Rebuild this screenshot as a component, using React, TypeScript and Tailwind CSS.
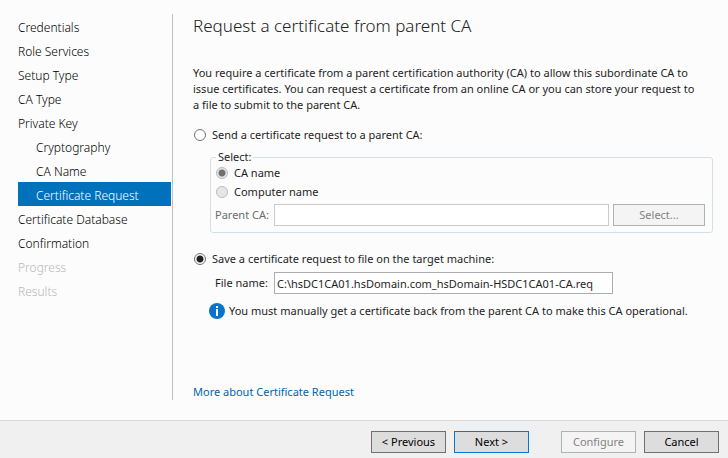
import React from 'react';
import {useState} from 'react';
import clsx from 'clsx';

type Step = {
  name: string;
  nested?: boolean;
  disabled?: boolean;
};

const steps: Step[] = [
  {name: 'Credentials'},
  {name: 'Role Services'},
  {name: 'Setup Type'},
  {name: 'CA Type'},
  {name: 'Private Key'},
  {name: 'Cryptography', nested: true},
  {name: 'CA Name', nested: true},
  {name: 'Certificate Request', nested: true},
  {name: 'Certificate Database'},
  {name: 'Confirmation'},
  {name: 'Progress', disabled: true},
  {name: 'Results', disabled: true},
];

const radioClass =
  'size-3 shrink-0 appearance-none rounded-full border border-[#707070] bg-white checked:bg-[radial-gradient(circle,#212121_3px,#ffffff_4px)] disabled:border-[#bcbcbc] disabled:bg-[#e6e6e6] disabled:checked:bg-[radial-gradient(circle,#707070_3px,#e6e6e6_4px)]';

const buttonClass =
  'h-[22px] border border-[#707070] bg-[#dddddd] text-center text-black disabled:border-[#adb2b5] disabled:bg-[#f4f4f4] disabled:text-[#838383]';

function InfoIcon() {
  return (
    <svg viewBox="0 0 16 16" className="size-4 shrink-0" aria-hidden="true">
      <circle cx="8" cy="8" r="8" fill="#0a74cb" />
      <rect x="7" y="3" width="2" height="2" fill="#fff" />
      <rect x="7" y="6" width="2" height="7" fill="#fff" />
    </svg>
  );
}

function StepList() {
  const [current, setCurrent] = useState('Certificate Request');

  return (
    <nav className="w-[153px] shrink-0 text-[12px] font-light">
      {steps.map((step) => (
        <button
          key={step.name}
          type="button"
          disabled={step.disabled}
          onClick={() => setCurrent(step.name)}
          className={clsx(
            'block h-6 w-full pt-1 text-left leading-5 whitespace-nowrap',
            step.nested && 'pl-[18px]',
            step.disabled && 'text-[#b8b8b8]',
            !step.disabled && step.name !== current && 'text-black',
            step.name === current && 'bg-[#0072bc] text-white'
          )}
        >
          {step.name}
        </button>
      ))}
    </nav>
  );
}

export default function App() {
  const [mode, setMode] = useState('save');
  const [fileName, setFileName] = useState(
    'C:\\hsDC1CA01.hsDomain.com_hsDomain-HSDC1CA01-CA.req'
  );
  const saving = mode === 'save';

  return (
    <div className="flex min-h-screen flex-col bg-[#fcfcfc] font-['Noto_Sans','Open_Sans',sans-serif] text-[11px] leading-4 text-[#1e1e1e]">
      <div className="flex grow pt-3.5 pb-5 pl-[18px]">
        <StepList />
        <main className="ml-px flex min-w-0 grow flex-col border-l border-[#bfbfbf] pr-[15px] pl-5">
          <h1 className="text-[17px] leading-6 font-light text-[#222222]">
            Request a certificate from parent CA
          </h1>
          <p className="mt-[27px] max-w-[504px]">
            You require a certificate from a parent certification authority (CA)
            to allow this subordinate CA to issue certificates. You can request
            a certificate from an online CA or you can store your request to a
            file to submit to the parent CA.
          </p>

          {/* Send to a parent CA */}
          <label className="mt-3.5 flex items-center gap-1.5 pl-px">
            <input
              type="radio"
              name="mode"
              checked={!saving}
              onChange={() => setMode('send')}
              className={radioClass}
            />
            Send a certificate request to a parent CA:
          </label>
          <fieldset
            disabled={saving}
            className="mt-1.5 ml-[17px] rounded-[3px] border border-[#d5dfe5] pr-[7px] pb-1.5 pl-1"
          >
            <legend className="ml-px px-0.5">Select:</legend>
            <label className="flex items-center gap-1.5 pl-px">
              <input
                type="radio"
                name="lookup"
                defaultChecked
                className={radioClass}
              />
              CA name
            </label>
            <label className="mt-[3px] flex items-center gap-1.5 pl-px">
              <input type="radio" name="lookup" className={radioClass} />
              Computer name
            </label>
            <div className="mt-1 flex">
              <label
                htmlFor="parent-ca"
                className={clsx(
                  'w-[59px] shrink-0 leading-[22px] whitespace-nowrap',
                  saving && 'text-[#6d6d6d]'
                )}
              >
                Parent CA:
              </label>
              <input
                id="parent-ca"
                type="text"
                className="h-[22px] min-w-0 grow border border-[#abadb3] bg-white px-0.5 disabled:border-[#c9cacd]"
              />
              <button
                type="button"
                className={clsx(buttonClass, 'ml-1 w-[92px] shrink-0')}
              >
                Select...
              </button>
            </div>
          </fieldset>

          {/* Save to a file */}
          <label className="mt-[18px] flex items-center gap-1.5 pl-px">
            <input
              type="radio"
              name="mode"
              checked={saving}
              onChange={() => setMode('save')}
              className={radioClass}
            />
            Save a certificate request to file on the target machine:
          </label>
          <div className="mt-[5px] mr-[100px] flex pl-[22px]">
            <label
              htmlFor="file-name"
              className="w-[59px] shrink-0 leading-[22px] whitespace-nowrap"
            >
              File name:
            </label>
            <input
              id="file-name"
              type="text"
              value={fileName}
              disabled={!saving}
              onChange={(e) => setFileName(e.target.value)}
              className="h-[22px] min-w-0 grow border border-[#abadb3] bg-white px-0.5"
            />
          </div>
          <p className="mt-[9px] flex items-center gap-1 pl-4 whitespace-nowrap">
            <InfoIcon />
            You must manually get a certificate back from the parent CA to make
            this CA operational.
          </p>

          <a href="#more" className="mt-auto self-start text-[#0066aa]">
            More about Certificate Request
          </a>
        </main>
      </div>

      {/* Footer */}
      <footer className="flex justify-end gap-2 border-t border-[#d9d9d9] bg-[#f0f0f0] pt-2.5 pr-[9px] pb-[5px]">
        <button type="button" className={clsx(buttonClass, 'w-[75px]')}>
          &lt; Previous
        </button>
        <button
          type="button"
          className="h-[22px] w-[75px] border border-[#0078d7] bg-[#dddddd] text-center text-black"
        >
          Next &gt;
        </button>
        <button
          type="button"
          disabled
          className={clsx(buttonClass, 'ml-6 w-[75px]')}
        >
          Configure
        </button>
        <button type="button" className={clsx(buttonClass, 'w-[75px]')}>
          Cancel
        </button>
      </footer>
    </div>
  );
}
